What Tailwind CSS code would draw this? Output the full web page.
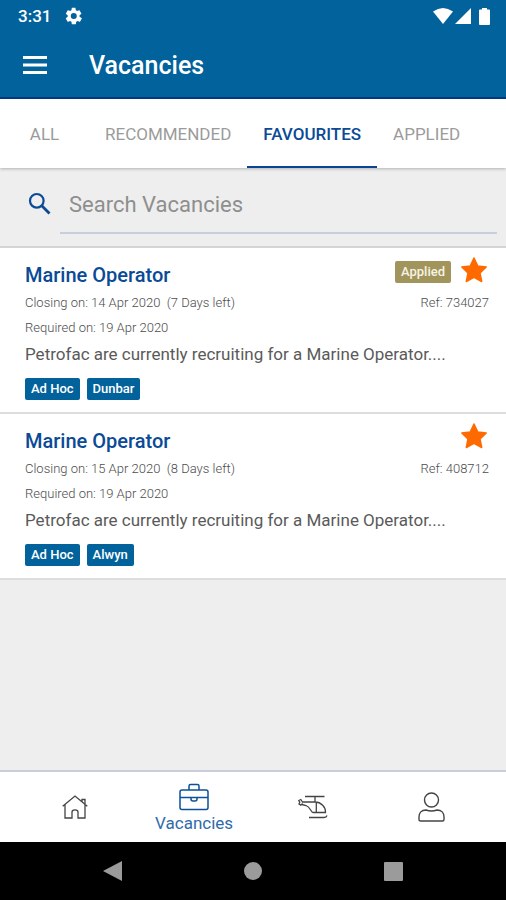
<!DOCTYPE html>
<html lang="en">
<head>
<meta charset="utf-8">
<meta name="viewport" content="width=device-width, initial-scale=1">
<title>Vacancies</title>
<script src="https://cdn.jsdelivr.net/npm/@tailwindcss/browser@4"></script>
</head>
<body class="flex min-h-screen flex-col bg-[#eeeeee] font-[Roboto,sans-serif]">
<header class="border-b-2 border-[#053a85] bg-[#02629c] text-white">
  <div class="flex h-8 items-center pl-[18px] pr-4">
    <span class="text-[17px] leading-8 font-medium">3:31</span>
    <svg class="ml-3.5 size-[18px]" viewBox="0 0 24 24" fill="currentColor" aria-hidden="true"><path fill-rule="evenodd" d="M19.4 13a7.500 7.500 0 0 0 0-2l2.200-1.700c.3-.2.300-.5.200-.8l-2.300-4c-.1-.3-.4-.3-.7-.2l-2.700 1.100a8 8 0 0 0-1.700-1l-.4-2.900c0-.3-.2-.5-.5-.5h-4c-.3 0-.5.200-.5.500l-.4 2.900c-.6.200-1.200.6-1.700 1L4.200 4.300c-.3-.1-.6 0-.7.200l-2.300 4c-.1.300-.1.600.200.800L3.600 11a7.500 7.500 0 0 0 0 2l-2.200 1.700c-.2.200-.3.500-.2.800l2.300 4c.1.300.4.300.7.200l2.700-1.100c.5.400 1.100.8 1.700 1l.4 2.900c0 .3.200.5.500.5h4.500c.3 0 .5-.2.500-.5l.4-2.900c.6-.2 1.200-.6 1.700-1l2.700 1.100c.3.100.6 0 .7-.2l2.300-4c.1-.3.100-.6-.2-.8zM11.700 16a4 4 0 1 1 0-8 4 4 0 0 1 0 8z"/></svg>
    <svg class="ml-auto h-4 w-5" viewBox="0 0 20 16" fill="currentColor" aria-hidden="true"><path d="M0 3.500Q10-3.500 20 3.500L10 16z"/></svg>
    <svg class="ml-0.5 size-4" viewBox="0 0 16 16" fill="currentColor" aria-hidden="true"><path d="M0 16L16 0v16z"/></svg>
    <svg class="ml-2 h-[17px] w-[11px]" viewBox="0 0 11 17" fill="currentColor" aria-hidden="true"><path d="M3 0h5v1.500h2q1 0 1 1v13.500q0 1-1 1H1q-1 0-1-1V2.500q0-1 1-1h2z"/></svg>
  </div>
  <div class="flex h-[65px] items-center pl-[23px]">
    <button type="button" aria-label="Open menu" class="block">
      <svg class="h-[18px] w-6" viewBox="0 0 24 18" fill="currentColor" aria-hidden="true"><path d="M0 0h24v3H0zM0 7.500h24v3H0zM0 15h24v3H0z"/></svg>
    </button>
    <h1 class="ml-[42px] pt-0.5 text-[25px] leading-8 font-medium">Vacancies</h1>
  </div>
</header>

<nav aria-label="Vacancy lists" class="z-10 flex h-[69px] overflow-hidden bg-white text-[17px] text-[#9b9b9b] shadow-[0_1px_3px_rgba(0,0,0,0.25)]">
  <a href="#" class="flex w-[89px] shrink-0 items-center justify-center border-b-2 border-transparent pt-1">ALL</a>
  <a href="#" class="flex shrink-0 items-center border-b-2 border-transparent px-4 pt-1">RECOMMENDED</a>
  <a href="#" aria-current="page" class="flex shrink-0 items-center border-b-2 border-[#0a4595] px-4 pt-1 font-medium text-[#0a4a96]">FAVOURITES</a>
  <a href="#" class="flex shrink-0 items-center border-b-2 border-transparent px-4 pt-1">APPLIED</a>
</nav>

<main class="grow">
  <form class="flex h-20 items-start border-b-2 border-[#d4d4d4] pr-[9px] pl-7">
    <label for="search" aria-label="Search Vacancies" class="mt-6 text-[#0a4a96]">
      <svg class="size-6" viewBox="0 0 24 24" fill="none" stroke="currentColor" aria-hidden="true"><circle cx="8.800" cy="8.800" r="6.800" stroke-width="2.200"/><path d="M13.800 13.800L21.500 21.500" stroke-width="2.800"/></svg>
    </label>
    <input id="search" type="text" placeholder="Search Vacancies" class="ml-2 h-[66px] min-w-0 grow border-b-2 border-[#c5d0dc] pb-0.5 pl-[9px] pt-2.5 text-[22px] text-[#555555] outline-none placeholder:text-[#8e8e8e]">
  </form>

  <article class="border-b-2 border-[#dddddd] bg-white pt-3 pr-[17px] pb-3 pl-[25px]">
    <div class="flex h-[30px] items-center">
      <h2 class="text-xl font-medium text-[#0a4a96]">Marine Operator</h2>
      <span class="mb-1.5 ml-auto rounded-xs bg-[#a1955b] px-1.5 text-[13px] leading-[22px] font-medium text-[#f6f3e4]">Applied</span>
      <button type="button" aria-label="Remove from favourites" class="mb-2.5 ml-2 text-[#ff6a00]"><svg class="size-[30px]" viewBox="0 0 30 30" fill="currentColor" stroke="currentColor" stroke-width="1.500" stroke-linejoin="round" aria-hidden="true"><path d="M15 3L18.800 11L27.200 12L21 17.900L22.700 26.500L15 22.300L7.300 26.500L9 17.900L2.800 12L11.200 11z"/></svg></button>
    </div>
    <div class="flex justify-between text-[13px] leading-[25px] font-light text-[#4c4c4c]">
      <p class="whitespace-pre">Closing on: 14 Apr 2020  (7 Days left)</p>
      <p>Ref: 734027</p>
    </div>
    <p class="text-[13px] leading-[25px] font-light text-[#4c4c4c]">Required on: 19 Apr 2020</p>
    <p class="text-[17px] leading-7 text-[#5a5a5a]">Petrofac are currently recruiting for a Marine Operator....</p>
    <div class="mt-2.5 flex gap-[7px] text-[13px] leading-[22px] font-medium text-white">
      <span class="rounded-xs bg-[#02629c] px-1.5">Ad Hoc</span>
      <span class="rounded-xs bg-[#02629c] px-1.5">Dunbar</span>
    </div>
  </article>

  <article class="border-b-2 border-[#dddddd] bg-white pt-3 pr-[17px] pb-3 pl-[25px]">
    <div class="flex h-[30px] items-center">
      <h2 class="text-xl font-medium text-[#0a4a96]">Marine Operator</h2>
      <button type="button" aria-label="Remove from favourites" class="mb-2.5 ml-auto text-[#ff6a00]"><svg class="size-[30px]" viewBox="0 0 30 30" fill="currentColor" stroke="currentColor" stroke-width="1.500" stroke-linejoin="round" aria-hidden="true"><path d="M15 3L18.800 11L27.200 12L21 17.900L22.700 26.500L15 22.300L7.300 26.500L9 17.900L2.800 12L11.200 11z"/></svg></button>
    </div>
    <div class="flex justify-between text-[13px] leading-[25px] font-light text-[#4c4c4c]">
      <p class="whitespace-pre">Closing on: 15 Apr 2020  (8 Days left)</p>
      <p>Ref: 408712</p>
    </div>
    <p class="text-[13px] leading-[25px] font-light text-[#4c4c4c]">Required on: 19 Apr 2020</p>
    <p class="text-[17px] leading-7 text-[#5a5a5a]">Petrofac are currently recruiting for a Marine Operator....</p>
    <div class="mt-2.5 flex gap-[7px] text-[13px] leading-[22px] font-medium text-white">
      <span class="rounded-xs bg-[#02629c] px-1.5">Ad Hoc</span>
      <span class="rounded-xs bg-[#02629c] px-1.5">Alwyn</span>
    </div>
  </article>
</main>

<nav aria-label="Main" class="grid h-[72px] grid-cols-4 border-t-2 border-[#c9cddb] bg-white pr-[15px] pl-4 text-[#444444]">
  <a href="#" aria-label="Home" class="flex items-center justify-center">
    <svg class="h-6 w-[26px]" viewBox="0 0 26 24" fill="none" stroke="currentColor" stroke-width="1.300" aria-hidden="true"><path d="M.700 11.300L13 1L25.300 11.300M3 9.500V23H10V17Q10 14.800 13 14.800T16 17V23H23V9.500M20 6.500V4.500H23V9.500"/></svg>
  </a>
  <a href="#" aria-current="page" class="flex flex-col items-center pt-[11px] text-[#0a5299]">
    <svg class="h-7 w-[30px]" viewBox="0 0 30 28" fill="none" stroke="currentColor" stroke-width="1.500" aria-hidden="true"><rect x="1" y="7" width="28" height="19.500" rx="2"/><path d="M10 7V3Q10 1.500 11.500 1.500H18.500Q20 1.500 20 3V7M1 14.500H12M18 14.500H29M12 14.500H18V16Q18 18 16 18H14Q12 18 12 16z"/></svg>
    <span class="text-[17px] leading-6 text-[#2f6ba8]">Vacancies</span>
  </a>
  <a href="#" aria-label="Flights" class="flex items-center justify-center">
    <svg class="h-6 w-[30px]" viewBox="0 0 30 24" fill="none" stroke="currentColor" stroke-width="1.300" aria-hidden="true"><path d="M7 1.500H26.500M17 1.500V7M4 7H17C23 7 28 12 27.500 17.500H15C13 17.500 12.500 12 8 10.500L4 9.500M18.300 7V17.500M19 17.500H27.500M11 22.500H26Q28.500 22.500 29 20.500"/><path d="M4.500 7L2.800 4.500L.800 5.500L1.800 7.200L1 9L2.800 10.200L4.500 8.500"/></svg>
  </a>
  <a href="#" aria-label="Profile" class="flex items-center justify-center">
    <svg class="h-[30px] w-[27px]" viewBox="0 0 27 30" fill="none" stroke="currentColor" stroke-width="1.400" aria-hidden="true"><circle cx="13.500" cy="8" r="7"/><path d="M8 18Q13.500 20 19 18C23.500 18 26 21 26 25V27.500Q26 29 24.500 29H2.500Q1 29 1 27.500V25C1 21 3.500 18 8 18z"/></svg>
  </a>
</nav>

<footer class="flex h-[58px] items-center justify-center bg-black text-[#9b9b9b]">
  <div class="flex w-[300px] items-center justify-between">
    <button type="button" aria-label="Back"><svg class="h-5 w-[19px]" viewBox="0 0 19 20" fill="currentColor" aria-hidden="true"><path d="M0 10L19 0V20z"/></svg></button>
    <button type="button" aria-label="Home screen"><svg class="size-[18px]" viewBox="0 0 18 18" fill="currentColor" aria-hidden="true"><circle cx="9" cy="9" r="9"/></svg></button>
    <button type="button" aria-label="Recent apps"><svg class="size-[19px]" viewBox="0 0 19 19" fill="currentColor" aria-hidden="true"><rect width="19" height="19" rx="1"/></svg></button>
  </div>
</footer>
</body>
</html>
